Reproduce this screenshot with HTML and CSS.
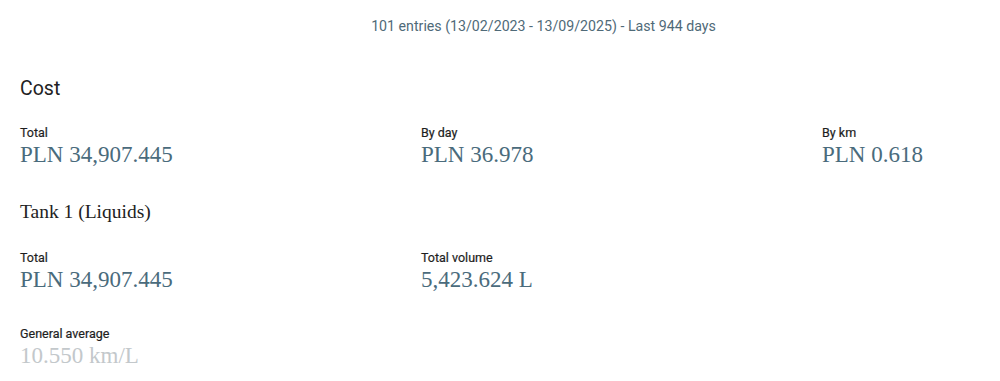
FILE: index.html
```html
<!DOCTYPE html>
<html lang="en">

    <head>
        <meta charset="UTF-8">
        <meta name="viewport" content="width=device-width, initial-scale=1.0">
        <link rel="stylesheet" href="styles.css">
    </head>

    <body>
        <div class="summary">101 entries (13/02/2023 - 13/09/2025) - Last 944 days</div>

        <div class="section">
            <div class="heading sans">Cost</div>
            <div class="grid">
                <div class="stat">
                    <span class="label">Total</span>
                    <span class="value">PLN 34,907.445</span>
                </div>
                <div class="stat">
                    <span class="label">By day</span>
                    <span class="value">PLN 36.978</span>
                </div>
                <div class="stat">
                    <span class="label">By km</span>
                    <span class="value">PLN 0.618</span>
                </div>
            </div>
        </div>

        <div class="section">
            <div class="heading">Tank 1 (Liquids)</div>
            <div class="grid">
                <div class="stat">
                    <span class="label">Total</span>
                    <span class="value">PLN 34,907.445</span>
                </div>
                <div class="stat">
                    <span class="label">Total volume</span>
                    <span class="value">5,423.624 L</span>
                </div>
                <div class="stat"></div>
                <div class="stat">
                    <span class="label">General average</span>
                    <span class="value faded">10.550 km/L</span>
                </div>
            </div>
        </div>
    </body>

</html>
```

FILE: styles.css
```css
* {
    box-sizing: border-box;
}

body {
    margin: 0;
    background: white;
    font-family: Roboto, "Noto Sans", sans-serif;
    overflow: hidden;
    height: 381px;
}

.summary {
    padding: 18px 0 0 87px;
    text-align: center;
    font-size: 14.2px;
    color: #4f6a78;
}

.section {
    padding: 0 20px;
}

.heading {
    font-family: "Liberation Serif", serif;
    font-size: 19.5px;
    color: #222;
    margin-bottom: 27px;
}

.heading.sans {
    font-family: Roboto, sans-serif;
    margin-top: 43px;
    margin-bottom: 25px;
}

.section + .section .heading {
    margin-top: 32px;
}

.grid {
    display: grid;
    grid-template-columns: 401px 401px 1fr;
    row-gap: 32px;
}

.stat {
    display: flex;
    flex-direction: column;
}

.label {
    font-size: 12.5px;
    color: #1e1e1e;
    line-height: 16px;
    -webkit-text-stroke: 0.2px #1e1e1e;
}

.value {
    font-family: "Liberation Serif", serif;
    font-size: 23px;
    line-height: 28px;
    color: #4a6b7c;
}

.value.faded {
    color: #c3c8cb;
}
```
